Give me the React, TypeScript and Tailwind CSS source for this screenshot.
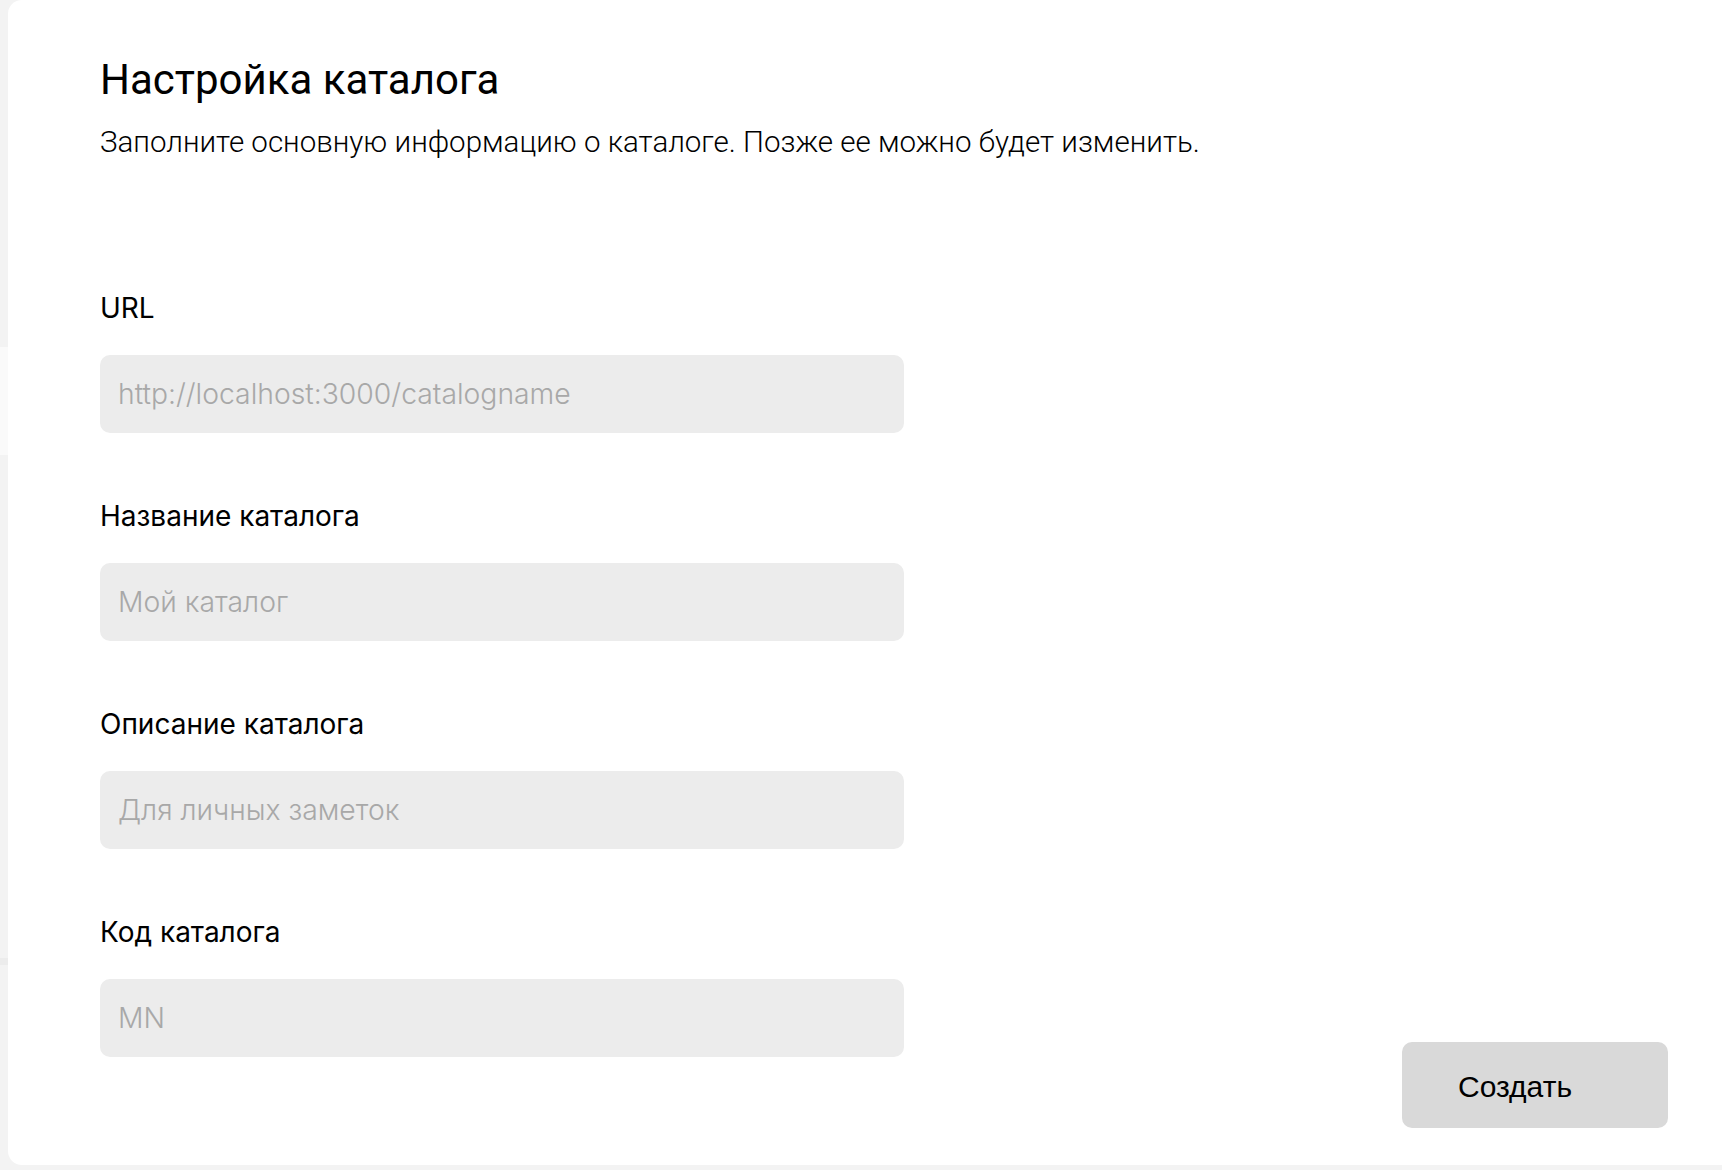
import React from 'react';

const fields = [
  { id: 'url', label: 'URL', placeholder: 'http://localhost:3000/catalogname' },
  { id: 'name', label: 'Название каталога', placeholder: 'Мой каталог' },
  { id: 'description', label: 'Описание каталога', placeholder: 'Для личных заметок' },
  { id: 'code', label: 'Код каталога', placeholder: 'MN' },
];

export default function App() {
  return (
    <div className="flex h-[1170px] w-full overflow-hidden bg-[#f3f3f3]">
      {/* page behind the sheet */}
      <div className="flex w-[8px] shrink-0 flex-col">
        <div className="h-[347px] bg-[#f3f3f3]" />
        <div className="h-[108px] bg-[#fafafa]" />
        <div className="h-[503px] bg-[#f3f3f3]" />
        <div className="h-[7px] bg-[#ececec]" />
        <div className="flex-1 bg-[#f3f3f3]" />
      </div>

      <div className="flex h-[1165px] flex-1 items-end justify-between rounded-l-[14px] bg-white pb-[37px] pl-[92px] pr-[54px]">
        <div className="self-start pt-[56px]">
          <h1 className="font-['Roboto',sans-serif] text-[42px] leading-[48px] text-black">Настройка каталога</h1>
          <p className="mt-[20px] font-['Roboto',sans-serif] text-[29.5px] font-light leading-[36px] text-black">
            Заполните основную информацию о каталоге. Позже ее можно будет изменить.
          </p>

          <form className="mt-[132px] flex w-[804px] flex-col gap-[67px]" onSubmit={(e) => e.preventDefault()}>
            {fields.map((f) => (
              <label key={f.id} className="flex flex-col gap-[31px]">
                <span className="font-['Inter',sans-serif] text-[28px] leading-[32px] text-black">
                  {f.label}
                </span>
                <input
                  type="text"
                  placeholder={f.placeholder}
                  className="h-[78px] w-full rounded-[10px] bg-[#ececec] px-[18px] font-['Inter',sans-serif] text-[28.3px] font-light text-black outline-none placeholder:text-[#a8a8a8]"
                />
              </label>
            ))}
          </form>
        </div>

        <button
          type="button"
          className="h-[86px] w-[266px] rounded-[10px] bg-[#d9d9d9] pl-[56px] pt-[2px] text-left font-['Liberation_Sans',Arial,sans-serif] text-[30px] text-black"
        >
          Создать
        </button>
      </div>
    </div>
  );
}
